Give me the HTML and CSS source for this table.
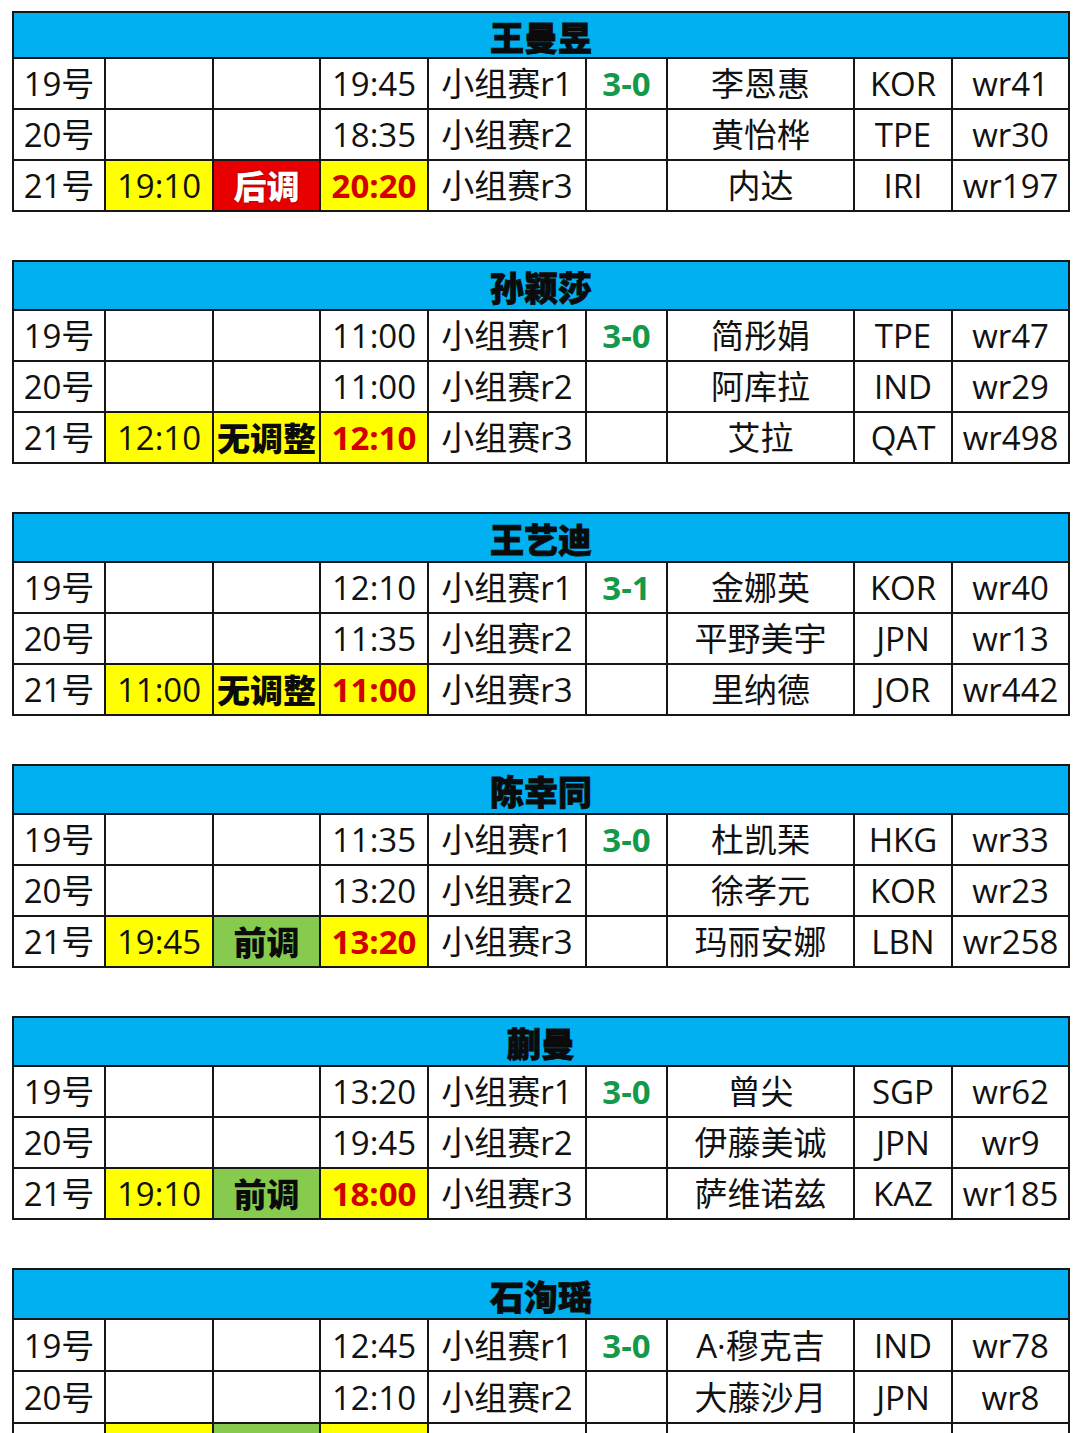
FILE: index.html
```html
<!DOCTYPE html>
<html lang="zh-CN">
<head>
<meta charset="utf-8">
<title>赛程</title>
<link rel="stylesheet" href="styles.css">
</head>
<body>
<div class="page">

<table class="schedule first">
  <colgroup><col class="c1"><col class="c2"><col class="c3"><col class="c4"><col class="c5"><col class="c6"><col class="c7"><col class="c8"><col class="c9"></colgroup>
  <tr class="head"><th colspan="9">王曼昱</th></tr>
  <tr><td>19号</td><td></td><td></td><td>19:45</td><td>小组赛r1</td><td class="score">3-0</td><td>李恩惠</td><td>KOR</td><td>wr41</td></tr>
  <tr><td>20号</td><td></td><td></td><td>18:35</td><td>小组赛r2</td><td></td><td>黄怡桦</td><td>TPE</td><td>wr30</td></tr>
  <tr><td>21号</td><td class="yellow">19:10</td><td class="red">后调</td><td class="yellow new">20:20</td><td>小组赛r3</td><td></td><td>内达</td><td>IRI</td><td>wr197</td></tr>
</table>

<table class="schedule">
  <colgroup><col class="c1"><col class="c2"><col class="c3"><col class="c4"><col class="c5"><col class="c6"><col class="c7"><col class="c8"><col class="c9"></colgroup>
  <tr class="head"><th colspan="9">孙颖莎</th></tr>
  <tr><td>19号</td><td></td><td></td><td>11:00</td><td>小组赛r1</td><td class="score">3-0</td><td>简彤娟</td><td>TPE</td><td>wr47</td></tr>
  <tr><td>20号</td><td></td><td></td><td>11:00</td><td>小组赛r2</td><td></td><td>阿库拉</td><td>IND</td><td>wr29</td></tr>
  <tr><td>21号</td><td class="yellow">12:10</td><td class="yellow tag">无调整</td><td class="yellow new">12:10</td><td>小组赛r3</td><td></td><td>艾拉</td><td>QAT</td><td>wr498</td></tr>
</table>

<table class="schedule">
  <colgroup><col class="c1"><col class="c2"><col class="c3"><col class="c4"><col class="c5"><col class="c6"><col class="c7"><col class="c8"><col class="c9"></colgroup>
  <tr class="head"><th colspan="9">王艺迪</th></tr>
  <tr><td>19号</td><td></td><td></td><td>12:10</td><td>小组赛r1</td><td class="score">3-1</td><td>金娜英</td><td>KOR</td><td>wr40</td></tr>
  <tr><td>20号</td><td></td><td></td><td>11:35</td><td>小组赛r2</td><td></td><td>平野美宇</td><td>JPN</td><td>wr13</td></tr>
  <tr><td>21号</td><td class="yellow">11:00</td><td class="yellow tag">无调整</td><td class="yellow new">11:00</td><td>小组赛r3</td><td></td><td>里纳德</td><td>JOR</td><td>wr442</td></tr>
</table>

<table class="schedule">
  <colgroup><col class="c1"><col class="c2"><col class="c3"><col class="c4"><col class="c5"><col class="c6"><col class="c7"><col class="c8"><col class="c9"></colgroup>
  <tr class="head"><th colspan="9">陈幸同</th></tr>
  <tr><td>19号</td><td></td><td></td><td>11:35</td><td>小组赛r1</td><td class="score">3-0</td><td>杜凯琹</td><td>HKG</td><td>wr33</td></tr>
  <tr><td>20号</td><td></td><td></td><td>13:20</td><td>小组赛r2</td><td></td><td>徐孝元</td><td>KOR</td><td>wr23</td></tr>
  <tr><td>21号</td><td class="yellow">19:45</td><td class="green tag">前调</td><td class="yellow new">13:20</td><td>小组赛r3</td><td></td><td>玛丽安娜</td><td>LBN</td><td>wr258</td></tr>
</table>

<table class="schedule">
  <colgroup><col class="c1"><col class="c2"><col class="c3"><col class="c4"><col class="c5"><col class="c6"><col class="c7"><col class="c8"><col class="c9"></colgroup>
  <tr class="head"><th colspan="9">蒯曼</th></tr>
  <tr><td>19号</td><td></td><td></td><td>13:20</td><td>小组赛r1</td><td class="score">3-0</td><td>曾尖</td><td>SGP</td><td>wr62</td></tr>
  <tr><td>20号</td><td></td><td></td><td>19:45</td><td>小组赛r2</td><td></td><td>伊藤美诚</td><td>JPN</td><td>wr9</td></tr>
  <tr><td>21号</td><td class="yellow">19:10</td><td class="green tag">前调</td><td class="yellow new">18:00</td><td>小组赛r3</td><td></td><td>萨维诺兹</td><td>KAZ</td><td>wr185</td></tr>
</table>

<table class="schedule last">
  <colgroup><col class="c1"><col class="c2"><col class="c3"><col class="c4"><col class="c5"><col class="c6"><col class="c7"><col class="c8"><col class="c9"></colgroup>
  <tr class="head"><th colspan="9">石洵瑶</th></tr>
  <tr><td>19号</td><td></td><td></td><td>12:45</td><td>小组赛r1</td><td class="score">3-0</td><td>A·穆克吉</td><td>IND</td><td>wr78</td></tr>
  <tr><td>20号</td><td></td><td></td><td>12:10</td><td>小组赛r2</td><td></td><td>大藤沙月</td><td>JPN</td><td>wr8</td></tr>
  <tr><td></td><td class="yellow"></td><td class="green tag"></td><td class="yellow new"></td><td></td><td></td><td></td><td></td><td></td></tr>
</table>

</div>
</body>
</html>
```

FILE: styles.css
```css
html, body {
  margin: 0;
  padding: 0;
  background: #ffffff;
}

.page {
  padding: 11px 0 0 12px;
  font-family: "Open Sans", "Noto Sans CJK SC", sans-serif;
  color: #111111;
}

.schedule {
  border-collapse: collapse;
  table-layout: fixed;
  width: 1056px;
  margin: 0 0 48px 0;
  font-size: 33px;
}

.schedule.last {
  margin-top: 3px;
}

.c1 { width: 92px; }
.c2 { width: 108px; }
.c3 { width: 107px; }
.c4 { width: 108px; }
.c5 { width: 158px; }
.c6 { width: 81px; }
.c7 { width: 187px; }
.c8 { width: 98px; }
.c9 { width: 117px; }

.schedule td,
.schedule th {
  border: 2px solid #161616;
  padding: 0;
  text-align: center;
  vertical-align: middle;
  white-space: nowrap;
  line-height: 1;
}

.schedule td {
  overflow: hidden;
}

.schedule tr {
  height: 51px;
}

.schedule tr.head {
  height: 49px;
}

.schedule.first tr.head {
  height: 46px;
}

.schedule.last tr {
  height: 52px;
}

.schedule.last tr.head {
  height: 50px;
}

.schedule th {
  background: #00b0f0;
  font-family: "Noto Sans CJK SC", sans-serif;
  font-weight: 900;
  font-size: 34px;
  color: #0b0b0b;
  -webkit-text-stroke: 0.8px #0b0b0b;
  padding-top: 3px;
}

.score {
  color: #14994a;
  font-weight: 700;
}

.yellow {
  background: #ffff00;
}

.red {
  background: #e80000;
  color: #ffffff;
  font-family: "Noto Sans CJK SC", sans-serif;
  font-weight: 900;
  text-shadow: 0 0 2px rgba(0, 0, 0, 0.45);
}

.green {
  background: #86cb4e;
}

.tag {
  font-family: "Noto Sans CJK SC", sans-serif;
  font-weight: 900;
  color: #0b0b0b;
}

.new {
  color: #d20000;
  font-weight: 700;
}
```
